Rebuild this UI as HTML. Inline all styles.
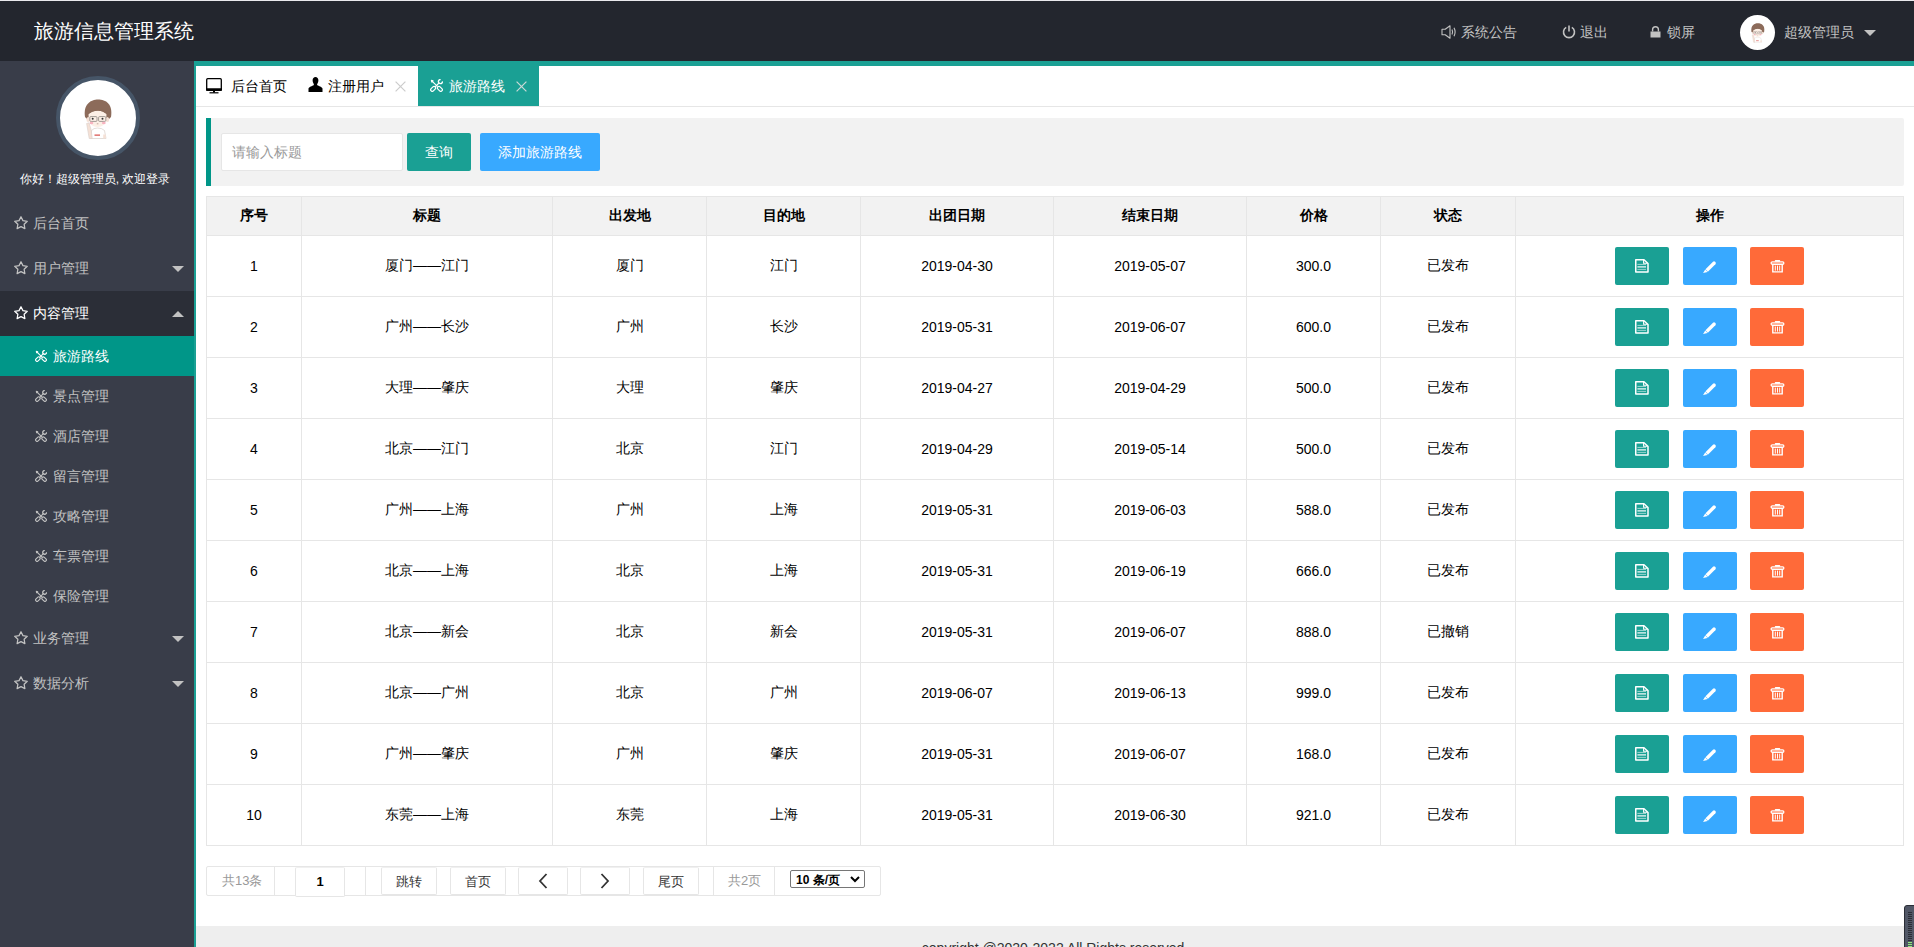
<!DOCTYPE html>
<html><head><meta charset="utf-8">
<style>
*{box-sizing:border-box;margin:0;padding:0}
html,body{width:1914px;height:947px;overflow:hidden;background:#fff;font-family:"Liberation Sans",sans-serif;font-size:14px;color:#333}
.abs{position:absolute}
svg{display:block}
#topline{left:0;top:0;width:1914px;height:1px;background:#e9e9ed}
#header{left:0;top:1px;width:1914px;height:60px;background:#23262e}
#logo{left:34px;top:16px;font-size:20px;color:#fff;line-height:28px;white-space:nowrap}
.htx{position:absolute;color:#c2c2c2;font-size:14px;line-height:20px;top:21px;white-space:nowrap}
.hic{position:absolute}
#side{left:0;top:61px;width:194px;height:886px;background:#393d49}
#main{left:194px;top:61px;width:1720px;height:886px;border-left:2px solid #1aa094;border-top:5px solid #1aa094;background:#fff}
.menu{left:0;width:194px;height:45px;font-size:14px;line-height:45px;white-space:nowrap}
.menu .ic{position:absolute;left:14px;top:15px}
.menu .tx{position:absolute;left:33px;top:0}
.menu .arr{position:absolute;left:172px;top:20px;width:0;height:0;border-left:6px solid transparent;border-right:6px solid transparent;border-top:6px solid #c2c2c2}
.menu .arr.up{border-top:0;border-bottom:6px solid #c2c2c2;top:20px}
.sub{left:0;width:194px;height:40px;color:#c2c2c2;font-size:14px;line-height:40px;white-space:nowrap}
.sub .ic{position:absolute;left:35px;top:14px}
.sub .tx{position:absolute;left:53px;top:0}
#welcome{left:-2px;top:110px;width:194px;text-align:center;color:#fff;font-size:12px;font-weight:normal;line-height:16px;white-space:nowrap}
#avatar{left:56px;top:15px;width:84px;height:84px;border-radius:50%;background:#fff;border:4px solid #465567;overflow:hidden}
#tabs{left:0;top:0;width:1718px;height:41px;border-bottom:1px solid #e6e6e6}
.tab{position:absolute;top:0;height:40px;line-height:40px;font-size:14px;color:#000;white-space:nowrap}
#quote{left:10px;top:52px;width:1698px;height:68px;background:#f2f2f2;border-left:5px solid #009688;border-radius:0 2px 2px 0}
#inp{position:absolute;left:10px;top:15px;width:182px;height:38px;background:#fff;border:1px solid #e6e6e6;border-radius:2px;color:#999;font-size:14px;line-height:36px;padding-left:10px}
.qbtn{position:absolute;top:15px;height:38px;line-height:38px;color:#fff;font-size:14px;border-radius:2px;text-align:center}
#tbl{left:10px;top:130px}
table{border-collapse:collapse;table-layout:fixed;width:1698px}
th,td{border:1px solid #e6e6e6;text-align:center;font-size:14px;color:#000;padding:0}
th{background:#f2f2f2;height:39px;font-weight:bold;color:#000}
td{height:61px}
.btns{display:flex;justify-content:center}
.b{position:relative;width:54px;height:38px;border-radius:2px;display:block}.b+.b{margin-left:14px}.b+.b+.b{margin-left:13px}
#pager{left:10px;top:800px;width:675px;height:30px;border:1px solid #e6e6e6;border-radius:2px}
.pgd{position:absolute;top:0;height:28px;border-left:1px solid #e6e6e6}
.pgb{position:absolute;top:0;height:28px;border:1px solid #e6e6e6;border-top-color:#f0f0f0;border-radius:2px;background:#fff;text-align:center;line-height:28px;font-size:13px;color:#333}
.pgt{position:absolute;top:0;height:28px;line-height:28px;font-size:13px;color:#999;white-space:nowrap}
#footer{left:0;top:860px;width:1718px;height:30px;background:#eee;text-align:center;font-size:14px;color:#333;line-height:20px;padding-top:12px}
</style></head><body>
<div id="topline" class="abs"></div>
<div id="header" class="abs">
  <div id="logo" class="abs">旅游信息管理系统</div>
  <span class="hic" style="left:1441px;top:24px"><svg width="16" height="14" viewBox="0 0 16 14" fill="none" stroke="#c2c2c2" stroke-width="1.1"><path d="M1 4.2h3.2L9 0.8v12.4L4.2 9.8H1z" stroke-linejoin="round"/><path d="M11 4.5q1.2 2.5 0 5"/><path d="M13 2.8q2.2 4.2 0 8.4"/></svg></span><span class="htx" style="left:1461px">系统公告</span>
  <span class="hic" style="left:1562px;top:24px"><svg width="14" height="14" viewBox="0 0 14 14" fill="none" stroke="#c2c2c2" stroke-width="1.6"><path d="M4.2 2.4A5.5 5.5 0 1 0 9.8 2.4"/><path d="M7 0.5v6"/></svg></span><span class="htx" style="left:1580px">退出</span>
  <span class="hic" style="left:1650px;top:25px"><svg width="11" height="12" viewBox="0 0 11 12"><path d="M2.6 5.5V3.6a2.9 2.9 0 0 1 5.8 0v1.9" fill="none" stroke="#c2c2c2" stroke-width="1.4"/><rect x="0.5" y="5.5" width="10" height="6" fill="#c2c2c2"/></svg></span><span class="htx" style="left:1667px">锁屏</span>
  <span class="abs" style="left:1740px;top:14px;width:35px;height:35px;border-radius:50%;background:#fff;overflow:hidden;"><svg viewBox="0 0 40 48" width="19.6" height="23.5" style="position:absolute;left:7.7px;top:6.4px">
<path d="M7 22 C5 9 13 4.5 20 4.5 C28 4.5 35 9 33 22 L30 25 L10 25Z" fill="#8c6b5a"/>
<ellipse cx="10.2" cy="24.5" rx="1.8" ry="2.6" fill="#f5e1d6"/><ellipse cx="29.4" cy="24.5" rx="1.8" ry="2.6" fill="#f5e1d6"/>
<path d="M10.5 19 Q10.5 32 19.5 32 Q28.5 32 28.5 19 Q24 15 19.5 15.5 Q15 15 10.5 19Z" fill="#fcefe6"/>
<path d="M9.5 20 Q11.5 13 20 14 Q27.5 13 29.5 20 Q26 15.8 20 15.8 Q14 15.8 9.5 20Z" fill="#8c6b5a"/>
<rect x="11.8" y="21.6" width="7.2" height="4.8" rx="1" fill="none" stroke="#8d8580" stroke-width="0.8"/>
<rect x="20.6" y="21.6" width="7.2" height="4.8" rx="1" fill="none" stroke="#8d8580" stroke-width="0.8"/>
<circle cx="14.7" cy="23.8" r="1" fill="#333"/><circle cx="24.5" cy="23.8" r="1" fill="#333"/>
<ellipse cx="13.4" cy="28" rx="1.9" ry="1.2" fill="#f7b3c0"/><ellipse cx="25.8" cy="28" rx="1.9" ry="1.2" fill="#f7b3c0"/>
<path d="M18.8 28.8h1.6" stroke="#a0766a" stroke-width="0.6"/>
<path d="M12.5 43.5 L13.5 35.5 Q15.5 33 19.5 33 Q24 33 26.5 35.5 L28 43.5Z" fill="#fff" stroke="#d9cfc9" stroke-width="0.7"/>
<path d="M16.5 40.2h5.5" stroke="#d9534f" stroke-width="1.3"/>
<path d="M8.6 28.5 L11 27.8 L13.2 35 L14.2 43.5 L11.2 43.5 Z" fill="#f5e1d6" stroke="#d9cfc9" stroke-width="0.6"/>
<rect x="25.2" y="39.5" width="2.6" height="3.8" fill="#f5e1d6"/>
</svg></span>
  <span class="htx" style="left:1784px">超级管理员</span>
  <span class="abs" style="left:1864px;top:29px;width:0;height:0;border-left:6px solid transparent;border-right:6px solid transparent;border-top:6px solid #c2c2c2"></span>
</div>
<div id="side" class="abs">
  <div id="avatar" class="abs"><svg viewBox="0 0 40 48" width="40" height="48" style="position:absolute;left:18px;top:15px">
<path d="M7 22 C5 9 13 4.5 20 4.5 C28 4.5 35 9 33 22 L30 25 L10 25Z" fill="#8c6b5a"/>
<ellipse cx="10.2" cy="24.5" rx="1.8" ry="2.6" fill="#f5e1d6"/><ellipse cx="29.4" cy="24.5" rx="1.8" ry="2.6" fill="#f5e1d6"/>
<path d="M10.5 19 Q10.5 32 19.5 32 Q28.5 32 28.5 19 Q24 15 19.5 15.5 Q15 15 10.5 19Z" fill="#fcefe6"/>
<path d="M9.5 20 Q11.5 13 20 14 Q27.5 13 29.5 20 Q26 15.8 20 15.8 Q14 15.8 9.5 20Z" fill="#8c6b5a"/>
<rect x="11.8" y="21.6" width="7.2" height="4.8" rx="1" fill="none" stroke="#8d8580" stroke-width="0.8"/>
<rect x="20.6" y="21.6" width="7.2" height="4.8" rx="1" fill="none" stroke="#8d8580" stroke-width="0.8"/>
<circle cx="14.7" cy="23.8" r="1" fill="#333"/><circle cx="24.5" cy="23.8" r="1" fill="#333"/>
<ellipse cx="13.4" cy="28" rx="1.9" ry="1.2" fill="#f7b3c0"/><ellipse cx="25.8" cy="28" rx="1.9" ry="1.2" fill="#f7b3c0"/>
<path d="M18.8 28.8h1.6" stroke="#a0766a" stroke-width="0.6"/>
<path d="M12.5 43.5 L13.5 35.5 Q15.5 33 19.5 33 Q24 33 26.5 35.5 L28 43.5Z" fill="#fff" stroke="#d9cfc9" stroke-width="0.7"/>
<path d="M16.5 40.2h5.5" stroke="#d9534f" stroke-width="1.3"/>
<path d="M8.6 28.5 L11 27.8 L13.2 35 L14.2 43.5 L11.2 43.5 Z" fill="#f5e1d6" stroke="#d9cfc9" stroke-width="0.6"/>
<rect x="25.2" y="39.5" width="2.6" height="3.8" fill="#f5e1d6"/>
</svg></div>
  <div id="welcome" class="abs">你好！超级管理员, 欢迎登录</div>
  <div class="menu abs" style="top:140px;color:#c2c2c2"><span class="ic"><svg width="14" height="14" viewBox="0 0 14 14"><polygon points="7.00,0.70 8.94,4.63 13.28,5.26 10.14,8.32 10.88,12.64 7.00,10.60 3.12,12.64 3.86,8.32 0.72,5.26 5.06,4.63" fill="none" stroke="currentColor" stroke-width="1.25" stroke-linejoin="round"/></svg></span><span class="tx">后台首页</span></div><div class="menu abs" style="top:185px;color:#c2c2c2"><span class="ic"><svg width="14" height="14" viewBox="0 0 14 14"><polygon points="7.00,0.70 8.94,4.63 13.28,5.26 10.14,8.32 10.88,12.64 7.00,10.60 3.12,12.64 3.86,8.32 0.72,5.26 5.06,4.63" fill="none" stroke="currentColor" stroke-width="1.25" stroke-linejoin="round"/></svg></span><span class="tx">用户管理</span><span class="arr"></span></div><div class="menu abs" style="top:230px;background:#2b2e37;color:#fff"><span class="ic"><svg width="14" height="14" viewBox="0 0 14 14"><polygon points="7.00,0.70 8.94,4.63 13.28,5.26 10.14,8.32 10.88,12.64 7.00,10.60 3.12,12.64 3.86,8.32 0.72,5.26 5.06,4.63" fill="none" stroke="currentColor" stroke-width="1.25" stroke-linejoin="round"/></svg></span><span class="tx">内容管理</span><span class="arr up"></span></div><div class="sub abs" style="top:275px;background:#009688;color:#fff;"><span class="ic"><svg width="12" height="12" viewBox="0 0 12 12" fill="none" stroke="currentColor"><g transform="translate(6 6) rotate(45)"><path d="M-7.2 -0.2L-5.4 -1.4L-4.4 -0.4L-4.4 0.4L-5.4 1.4L-7.2 0.2Z" fill="currentColor" stroke="none"/><path d="M-4.5 0H1.5" stroke-width="1.1"/><rect x="1.8" y="-1.45" width="5.2" height="2.9" rx="1.45" stroke-width="1.1"/></g><g transform="translate(6 6) rotate(-45)"><rect x="-7" y="-1.45" width="5.2" height="2.9" rx="1.45" stroke-width="1.1"/><path d="M-1.8 0H3.6" stroke-width="1.1"/><path d="M6.6 -1.2A1.9 1.9 0 1 0 6.6 1.2" stroke-width="1.3"/></g></svg></span><span class="tx">旅游路线</span></div><div class="sub abs" style="top:315px;"><span class="ic"><svg width="12" height="12" viewBox="0 0 12 12" fill="none" stroke="currentColor"><g transform="translate(6 6) rotate(45)"><path d="M-7.2 -0.2L-5.4 -1.4L-4.4 -0.4L-4.4 0.4L-5.4 1.4L-7.2 0.2Z" fill="currentColor" stroke="none"/><path d="M-4.5 0H1.5" stroke-width="1.1"/><rect x="1.8" y="-1.45" width="5.2" height="2.9" rx="1.45" stroke-width="1.1"/></g><g transform="translate(6 6) rotate(-45)"><rect x="-7" y="-1.45" width="5.2" height="2.9" rx="1.45" stroke-width="1.1"/><path d="M-1.8 0H3.6" stroke-width="1.1"/><path d="M6.6 -1.2A1.9 1.9 0 1 0 6.6 1.2" stroke-width="1.3"/></g></svg></span><span class="tx">景点管理</span></div><div class="sub abs" style="top:355px;"><span class="ic"><svg width="12" height="12" viewBox="0 0 12 12" fill="none" stroke="currentColor"><g transform="translate(6 6) rotate(45)"><path d="M-7.2 -0.2L-5.4 -1.4L-4.4 -0.4L-4.4 0.4L-5.4 1.4L-7.2 0.2Z" fill="currentColor" stroke="none"/><path d="M-4.5 0H1.5" stroke-width="1.1"/><rect x="1.8" y="-1.45" width="5.2" height="2.9" rx="1.45" stroke-width="1.1"/></g><g transform="translate(6 6) rotate(-45)"><rect x="-7" y="-1.45" width="5.2" height="2.9" rx="1.45" stroke-width="1.1"/><path d="M-1.8 0H3.6" stroke-width="1.1"/><path d="M6.6 -1.2A1.9 1.9 0 1 0 6.6 1.2" stroke-width="1.3"/></g></svg></span><span class="tx">酒店管理</span></div><div class="sub abs" style="top:395px;"><span class="ic"><svg width="12" height="12" viewBox="0 0 12 12" fill="none" stroke="currentColor"><g transform="translate(6 6) rotate(45)"><path d="M-7.2 -0.2L-5.4 -1.4L-4.4 -0.4L-4.4 0.4L-5.4 1.4L-7.2 0.2Z" fill="currentColor" stroke="none"/><path d="M-4.5 0H1.5" stroke-width="1.1"/><rect x="1.8" y="-1.45" width="5.2" height="2.9" rx="1.45" stroke-width="1.1"/></g><g transform="translate(6 6) rotate(-45)"><rect x="-7" y="-1.45" width="5.2" height="2.9" rx="1.45" stroke-width="1.1"/><path d="M-1.8 0H3.6" stroke-width="1.1"/><path d="M6.6 -1.2A1.9 1.9 0 1 0 6.6 1.2" stroke-width="1.3"/></g></svg></span><span class="tx">留言管理</span></div><div class="sub abs" style="top:435px;"><span class="ic"><svg width="12" height="12" viewBox="0 0 12 12" fill="none" stroke="currentColor"><g transform="translate(6 6) rotate(45)"><path d="M-7.2 -0.2L-5.4 -1.4L-4.4 -0.4L-4.4 0.4L-5.4 1.4L-7.2 0.2Z" fill="currentColor" stroke="none"/><path d="M-4.5 0H1.5" stroke-width="1.1"/><rect x="1.8" y="-1.45" width="5.2" height="2.9" rx="1.45" stroke-width="1.1"/></g><g transform="translate(6 6) rotate(-45)"><rect x="-7" y="-1.45" width="5.2" height="2.9" rx="1.45" stroke-width="1.1"/><path d="M-1.8 0H3.6" stroke-width="1.1"/><path d="M6.6 -1.2A1.9 1.9 0 1 0 6.6 1.2" stroke-width="1.3"/></g></svg></span><span class="tx">攻略管理</span></div><div class="sub abs" style="top:475px;"><span class="ic"><svg width="12" height="12" viewBox="0 0 12 12" fill="none" stroke="currentColor"><g transform="translate(6 6) rotate(45)"><path d="M-7.2 -0.2L-5.4 -1.4L-4.4 -0.4L-4.4 0.4L-5.4 1.4L-7.2 0.2Z" fill="currentColor" stroke="none"/><path d="M-4.5 0H1.5" stroke-width="1.1"/><rect x="1.8" y="-1.45" width="5.2" height="2.9" rx="1.45" stroke-width="1.1"/></g><g transform="translate(6 6) rotate(-45)"><rect x="-7" y="-1.45" width="5.2" height="2.9" rx="1.45" stroke-width="1.1"/><path d="M-1.8 0H3.6" stroke-width="1.1"/><path d="M6.6 -1.2A1.9 1.9 0 1 0 6.6 1.2" stroke-width="1.3"/></g></svg></span><span class="tx">车票管理</span></div><div class="sub abs" style="top:515px;"><span class="ic"><svg width="12" height="12" viewBox="0 0 12 12" fill="none" stroke="currentColor"><g transform="translate(6 6) rotate(45)"><path d="M-7.2 -0.2L-5.4 -1.4L-4.4 -0.4L-4.4 0.4L-5.4 1.4L-7.2 0.2Z" fill="currentColor" stroke="none"/><path d="M-4.5 0H1.5" stroke-width="1.1"/><rect x="1.8" y="-1.45" width="5.2" height="2.9" rx="1.45" stroke-width="1.1"/></g><g transform="translate(6 6) rotate(-45)"><rect x="-7" y="-1.45" width="5.2" height="2.9" rx="1.45" stroke-width="1.1"/><path d="M-1.8 0H3.6" stroke-width="1.1"/><path d="M6.6 -1.2A1.9 1.9 0 1 0 6.6 1.2" stroke-width="1.3"/></g></svg></span><span class="tx">保险管理</span></div><div class="menu abs" style="top:555px;color:#c2c2c2"><span class="ic"><svg width="14" height="14" viewBox="0 0 14 14"><polygon points="7.00,0.70 8.94,4.63 13.28,5.26 10.14,8.32 10.88,12.64 7.00,10.60 3.12,12.64 3.86,8.32 0.72,5.26 5.06,4.63" fill="none" stroke="currentColor" stroke-width="1.25" stroke-linejoin="round"/></svg></span><span class="tx">业务管理</span><span class="arr"></span></div><div class="menu abs" style="top:600px;color:#c2c2c2"><span class="ic"><svg width="14" height="14" viewBox="0 0 14 14"><polygon points="7.00,0.70 8.94,4.63 13.28,5.26 10.14,8.32 10.88,12.64 7.00,10.60 3.12,12.64 3.86,8.32 0.72,5.26 5.06,4.63" fill="none" stroke="currentColor" stroke-width="1.25" stroke-linejoin="round"/></svg></span><span class="tx">数据分析</span><span class="arr"></span></div>
</div>
<div id="main" class="abs">
  <div id="tabs" class="abs">
    <div class="tab" style="left:10px"><span class="abs" style="left:0;top:12px"><svg width="16" height="16" viewBox="0 0 16 16"><rect x="0.7" y="0.7" width="14.6" height="11.6" rx="1" fill="none" stroke="#000" stroke-width="1.3"/><rect x="0" y="10.2" width="16" height="2.6" rx="0.6" fill="#000"/><rect x="7" y="12.5" width="2" height="2" fill="#000"/><rect x="3.5" y="14.2" width="9" height="1.2" fill="#000"/></svg></span><span class="abs" style="left:25px;top:0">后台首页</span></div>
    <div class="tab" style="left:112px"><span class="abs" style="left:0;top:11px"><svg width="15" height="15" viewBox="0 0 15 15"><path d="M4.6 3.3C4.6 1.4 5.8 0 7.5 0S10.4 1.4 10.4 3.3c0 1.3-.3 2.4-.9 3.3-.4.6-.6 1.1-.1 1.6C10.5 9 14.2 9.6 14.5 11.6V15H0.5v-3.4C0.8 9.6 4.5 9 5.6 8.2c.5-.5.3-1-.1-1.6-.6-.9-.9-2-.9-3.3z" fill="#000"/></svg></span><span class="abs" style="left:20px;top:0">注册用户</span><span class="abs" style="left:87px;top:15px"><svg width="11" height="11" viewBox="0 0 11 11"><path d="M0.6 0.6l9.8 9.8M10.4 0.6l-9.8 9.8" stroke="#cccccc" stroke-width="1.2"/></svg></span></div>
    <div class="tab" style="left:222px;width:121px;background:#1aa094;color:#fff"><span class="abs" style="left:12px;top:13px"><svg width="13" height="13" viewBox="0 0 12 12" fill="none" stroke="currentColor"><g transform="translate(6 6) rotate(45)"><path d="M-7.2 -0.2L-5.4 -1.4L-4.4 -0.4L-4.4 0.4L-5.4 1.4L-7.2 0.2Z" fill="currentColor" stroke="none"/><path d="M-4.5 0H1.5" stroke-width="1.1"/><rect x="1.8" y="-1.45" width="5.2" height="2.9" rx="1.45" stroke-width="1.1"/></g><g transform="translate(6 6) rotate(-45)"><rect x="-7" y="-1.45" width="5.2" height="2.9" rx="1.45" stroke-width="1.1"/><path d="M-1.8 0H3.6" stroke-width="1.1"/><path d="M6.6 -1.2A1.9 1.9 0 1 0 6.6 1.2" stroke-width="1.3"/></g></svg></span><span class="abs" style="left:31px;top:0">旅游路线</span><span class="abs" style="left:98px;top:15px"><svg width="11" height="11" viewBox="0 0 11 11"><path d="M0.6 0.6l9.8 9.8M10.4 0.6l-9.8 9.8" stroke="#cbd9d6" stroke-width="1.2"/></svg></span></div>
  </div>
  <div id="quote" class="abs">
    <div id="inp">请输入标题</div>
    <div class="qbtn" style="left:196px;width:64px;background:#1aa094">查询</div>
    <div class="qbtn" style="left:269px;width:120px;background:#38a9ff">添加旅游路线</div>
  </div>
  <div id="tbl" class="abs">
  <table>
  <colgroup><col style="width:95px"><col style="width:251px"><col style="width:154px"><col style="width:154px"><col style="width:193px"><col style="width:193px"><col style="width:134px"><col style="width:135px"><col style="width:388px"></colgroup>
  <thead><tr><th>序号</th><th>标题</th><th>出发地</th><th>目的地</th><th>出团日期</th><th>结束日期</th><th>价格</th><th>状态</th><th>操作</th></tr></thead>
  <tbody>
  <tr><td>1</td><td>厦门——江门</td><td>厦门</td><td>江门</td><td>2019-04-30</td><td>2019-05-07</td><td>300.0</td><td>已发布</td><td><div class="btns"><span class="b" style="background:#1aa094"><svg style="position:absolute;left:20px;top:12px" width="14" height="14" viewBox="0 0 14 14" fill="none" stroke="#fff"><path d="M0.75 0.75H9L13 4.5V12.95H0.75Z" stroke-width="1.5" stroke-linejoin="round"/><path d="M8.6 1V4.3H12.6" stroke-width="1.1"/><path d="M2.4 5.4H11" stroke-width="1" opacity=".6"/><path d="M2.4 7.9H11" stroke-width="1.2"/><path d="M2.4 10.4H11" stroke-width="1" opacity=".55"/></svg></span><span class="b" style="background:#38a9ff"><svg style="position:absolute;left:20px;top:13px" width="14" height="14" viewBox="0 0 14 14"><path d="M2.5 9.3L10 1.8a1.5 1.5 0 0 1 2.1 0l0.3 0.3a1.5 1.5 0 0 1 0 2.1L4.9 11.7Z" fill="#fff"/><path d="M2.2 9.6L0.1 13L4.6 12Z" fill="#fff"/></svg></span><span class="b" style="background:#ff6a39"><svg style="position:absolute;left:20px;top:13px" width="15" height="13" viewBox="0 0 15 13" fill="none" stroke="#fff"><rect x="1.15" y="1.85" width="12.7" height="2.4" rx="1.2" stroke-width="1.3"/><rect x="4.8" y="0" width="5.4" height="1.7" rx="0.7" fill="#fff" stroke="none"/><path d="M2.8 4.4V11.9H12.2V4.4" stroke-width="1.4"/><path d="M5.3 5.6V10.6M7.5 5.6V10.6M9.7 5.6V10.6" stroke-width="1"/></svg></span></div></td></tr>
<tr><td>2</td><td>广州——长沙</td><td>广州</td><td>长沙</td><td>2019-05-31</td><td>2019-06-07</td><td>600.0</td><td>已发布</td><td><div class="btns"><span class="b" style="background:#1aa094"><svg style="position:absolute;left:20px;top:12px" width="14" height="14" viewBox="0 0 14 14" fill="none" stroke="#fff"><path d="M0.75 0.75H9L13 4.5V12.95H0.75Z" stroke-width="1.5" stroke-linejoin="round"/><path d="M8.6 1V4.3H12.6" stroke-width="1.1"/><path d="M2.4 5.4H11" stroke-width="1" opacity=".6"/><path d="M2.4 7.9H11" stroke-width="1.2"/><path d="M2.4 10.4H11" stroke-width="1" opacity=".55"/></svg></span><span class="b" style="background:#38a9ff"><svg style="position:absolute;left:20px;top:13px" width="14" height="14" viewBox="0 0 14 14"><path d="M2.5 9.3L10 1.8a1.5 1.5 0 0 1 2.1 0l0.3 0.3a1.5 1.5 0 0 1 0 2.1L4.9 11.7Z" fill="#fff"/><path d="M2.2 9.6L0.1 13L4.6 12Z" fill="#fff"/></svg></span><span class="b" style="background:#ff6a39"><svg style="position:absolute;left:20px;top:13px" width="15" height="13" viewBox="0 0 15 13" fill="none" stroke="#fff"><rect x="1.15" y="1.85" width="12.7" height="2.4" rx="1.2" stroke-width="1.3"/><rect x="4.8" y="0" width="5.4" height="1.7" rx="0.7" fill="#fff" stroke="none"/><path d="M2.8 4.4V11.9H12.2V4.4" stroke-width="1.4"/><path d="M5.3 5.6V10.6M7.5 5.6V10.6M9.7 5.6V10.6" stroke-width="1"/></svg></span></div></td></tr>
<tr><td>3</td><td>大理——肇庆</td><td>大理</td><td>肇庆</td><td>2019-04-27</td><td>2019-04-29</td><td>500.0</td><td>已发布</td><td><div class="btns"><span class="b" style="background:#1aa094"><svg style="position:absolute;left:20px;top:12px" width="14" height="14" viewBox="0 0 14 14" fill="none" stroke="#fff"><path d="M0.75 0.75H9L13 4.5V12.95H0.75Z" stroke-width="1.5" stroke-linejoin="round"/><path d="M8.6 1V4.3H12.6" stroke-width="1.1"/><path d="M2.4 5.4H11" stroke-width="1" opacity=".6"/><path d="M2.4 7.9H11" stroke-width="1.2"/><path d="M2.4 10.4H11" stroke-width="1" opacity=".55"/></svg></span><span class="b" style="background:#38a9ff"><svg style="position:absolute;left:20px;top:13px" width="14" height="14" viewBox="0 0 14 14"><path d="M2.5 9.3L10 1.8a1.5 1.5 0 0 1 2.1 0l0.3 0.3a1.5 1.5 0 0 1 0 2.1L4.9 11.7Z" fill="#fff"/><path d="M2.2 9.6L0.1 13L4.6 12Z" fill="#fff"/></svg></span><span class="b" style="background:#ff6a39"><svg style="position:absolute;left:20px;top:13px" width="15" height="13" viewBox="0 0 15 13" fill="none" stroke="#fff"><rect x="1.15" y="1.85" width="12.7" height="2.4" rx="1.2" stroke-width="1.3"/><rect x="4.8" y="0" width="5.4" height="1.7" rx="0.7" fill="#fff" stroke="none"/><path d="M2.8 4.4V11.9H12.2V4.4" stroke-width="1.4"/><path d="M5.3 5.6V10.6M7.5 5.6V10.6M9.7 5.6V10.6" stroke-width="1"/></svg></span></div></td></tr>
<tr><td>4</td><td>北京——江门</td><td>北京</td><td>江门</td><td>2019-04-29</td><td>2019-05-14</td><td>500.0</td><td>已发布</td><td><div class="btns"><span class="b" style="background:#1aa094"><svg style="position:absolute;left:20px;top:12px" width="14" height="14" viewBox="0 0 14 14" fill="none" stroke="#fff"><path d="M0.75 0.75H9L13 4.5V12.95H0.75Z" stroke-width="1.5" stroke-linejoin="round"/><path d="M8.6 1V4.3H12.6" stroke-width="1.1"/><path d="M2.4 5.4H11" stroke-width="1" opacity=".6"/><path d="M2.4 7.9H11" stroke-width="1.2"/><path d="M2.4 10.4H11" stroke-width="1" opacity=".55"/></svg></span><span class="b" style="background:#38a9ff"><svg style="position:absolute;left:20px;top:13px" width="14" height="14" viewBox="0 0 14 14"><path d="M2.5 9.3L10 1.8a1.5 1.5 0 0 1 2.1 0l0.3 0.3a1.5 1.5 0 0 1 0 2.1L4.9 11.7Z" fill="#fff"/><path d="M2.2 9.6L0.1 13L4.6 12Z" fill="#fff"/></svg></span><span class="b" style="background:#ff6a39"><svg style="position:absolute;left:20px;top:13px" width="15" height="13" viewBox="0 0 15 13" fill="none" stroke="#fff"><rect x="1.15" y="1.85" width="12.7" height="2.4" rx="1.2" stroke-width="1.3"/><rect x="4.8" y="0" width="5.4" height="1.7" rx="0.7" fill="#fff" stroke="none"/><path d="M2.8 4.4V11.9H12.2V4.4" stroke-width="1.4"/><path d="M5.3 5.6V10.6M7.5 5.6V10.6M9.7 5.6V10.6" stroke-width="1"/></svg></span></div></td></tr>
<tr><td>5</td><td>广州——上海</td><td>广州</td><td>上海</td><td>2019-05-31</td><td>2019-06-03</td><td>588.0</td><td>已发布</td><td><div class="btns"><span class="b" style="background:#1aa094"><svg style="position:absolute;left:20px;top:12px" width="14" height="14" viewBox="0 0 14 14" fill="none" stroke="#fff"><path d="M0.75 0.75H9L13 4.5V12.95H0.75Z" stroke-width="1.5" stroke-linejoin="round"/><path d="M8.6 1V4.3H12.6" stroke-width="1.1"/><path d="M2.4 5.4H11" stroke-width="1" opacity=".6"/><path d="M2.4 7.9H11" stroke-width="1.2"/><path d="M2.4 10.4H11" stroke-width="1" opacity=".55"/></svg></span><span class="b" style="background:#38a9ff"><svg style="position:absolute;left:20px;top:13px" width="14" height="14" viewBox="0 0 14 14"><path d="M2.5 9.3L10 1.8a1.5 1.5 0 0 1 2.1 0l0.3 0.3a1.5 1.5 0 0 1 0 2.1L4.9 11.7Z" fill="#fff"/><path d="M2.2 9.6L0.1 13L4.6 12Z" fill="#fff"/></svg></span><span class="b" style="background:#ff6a39"><svg style="position:absolute;left:20px;top:13px" width="15" height="13" viewBox="0 0 15 13" fill="none" stroke="#fff"><rect x="1.15" y="1.85" width="12.7" height="2.4" rx="1.2" stroke-width="1.3"/><rect x="4.8" y="0" width="5.4" height="1.7" rx="0.7" fill="#fff" stroke="none"/><path d="M2.8 4.4V11.9H12.2V4.4" stroke-width="1.4"/><path d="M5.3 5.6V10.6M7.5 5.6V10.6M9.7 5.6V10.6" stroke-width="1"/></svg></span></div></td></tr>
<tr><td>6</td><td>北京——上海</td><td>北京</td><td>上海</td><td>2019-05-31</td><td>2019-06-19</td><td>666.0</td><td>已发布</td><td><div class="btns"><span class="b" style="background:#1aa094"><svg style="position:absolute;left:20px;top:12px" width="14" height="14" viewBox="0 0 14 14" fill="none" stroke="#fff"><path d="M0.75 0.75H9L13 4.5V12.95H0.75Z" stroke-width="1.5" stroke-linejoin="round"/><path d="M8.6 1V4.3H12.6" stroke-width="1.1"/><path d="M2.4 5.4H11" stroke-width="1" opacity=".6"/><path d="M2.4 7.9H11" stroke-width="1.2"/><path d="M2.4 10.4H11" stroke-width="1" opacity=".55"/></svg></span><span class="b" style="background:#38a9ff"><svg style="position:absolute;left:20px;top:13px" width="14" height="14" viewBox="0 0 14 14"><path d="M2.5 9.3L10 1.8a1.5 1.5 0 0 1 2.1 0l0.3 0.3a1.5 1.5 0 0 1 0 2.1L4.9 11.7Z" fill="#fff"/><path d="M2.2 9.6L0.1 13L4.6 12Z" fill="#fff"/></svg></span><span class="b" style="background:#ff6a39"><svg style="position:absolute;left:20px;top:13px" width="15" height="13" viewBox="0 0 15 13" fill="none" stroke="#fff"><rect x="1.15" y="1.85" width="12.7" height="2.4" rx="1.2" stroke-width="1.3"/><rect x="4.8" y="0" width="5.4" height="1.7" rx="0.7" fill="#fff" stroke="none"/><path d="M2.8 4.4V11.9H12.2V4.4" stroke-width="1.4"/><path d="M5.3 5.6V10.6M7.5 5.6V10.6M9.7 5.6V10.6" stroke-width="1"/></svg></span></div></td></tr>
<tr><td>7</td><td>北京——新会</td><td>北京</td><td>新会</td><td>2019-05-31</td><td>2019-06-07</td><td>888.0</td><td>已撤销</td><td><div class="btns"><span class="b" style="background:#1aa094"><svg style="position:absolute;left:20px;top:12px" width="14" height="14" viewBox="0 0 14 14" fill="none" stroke="#fff"><path d="M0.75 0.75H9L13 4.5V12.95H0.75Z" stroke-width="1.5" stroke-linejoin="round"/><path d="M8.6 1V4.3H12.6" stroke-width="1.1"/><path d="M2.4 5.4H11" stroke-width="1" opacity=".6"/><path d="M2.4 7.9H11" stroke-width="1.2"/><path d="M2.4 10.4H11" stroke-width="1" opacity=".55"/></svg></span><span class="b" style="background:#38a9ff"><svg style="position:absolute;left:20px;top:13px" width="14" height="14" viewBox="0 0 14 14"><path d="M2.5 9.3L10 1.8a1.5 1.5 0 0 1 2.1 0l0.3 0.3a1.5 1.5 0 0 1 0 2.1L4.9 11.7Z" fill="#fff"/><path d="M2.2 9.6L0.1 13L4.6 12Z" fill="#fff"/></svg></span><span class="b" style="background:#ff6a39"><svg style="position:absolute;left:20px;top:13px" width="15" height="13" viewBox="0 0 15 13" fill="none" stroke="#fff"><rect x="1.15" y="1.85" width="12.7" height="2.4" rx="1.2" stroke-width="1.3"/><rect x="4.8" y="0" width="5.4" height="1.7" rx="0.7" fill="#fff" stroke="none"/><path d="M2.8 4.4V11.9H12.2V4.4" stroke-width="1.4"/><path d="M5.3 5.6V10.6M7.5 5.6V10.6M9.7 5.6V10.6" stroke-width="1"/></svg></span></div></td></tr>
<tr><td>8</td><td>北京——广州</td><td>北京</td><td>广州</td><td>2019-06-07</td><td>2019-06-13</td><td>999.0</td><td>已发布</td><td><div class="btns"><span class="b" style="background:#1aa094"><svg style="position:absolute;left:20px;top:12px" width="14" height="14" viewBox="0 0 14 14" fill="none" stroke="#fff"><path d="M0.75 0.75H9L13 4.5V12.95H0.75Z" stroke-width="1.5" stroke-linejoin="round"/><path d="M8.6 1V4.3H12.6" stroke-width="1.1"/><path d="M2.4 5.4H11" stroke-width="1" opacity=".6"/><path d="M2.4 7.9H11" stroke-width="1.2"/><path d="M2.4 10.4H11" stroke-width="1" opacity=".55"/></svg></span><span class="b" style="background:#38a9ff"><svg style="position:absolute;left:20px;top:13px" width="14" height="14" viewBox="0 0 14 14"><path d="M2.5 9.3L10 1.8a1.5 1.5 0 0 1 2.1 0l0.3 0.3a1.5 1.5 0 0 1 0 2.1L4.9 11.7Z" fill="#fff"/><path d="M2.2 9.6L0.1 13L4.6 12Z" fill="#fff"/></svg></span><span class="b" style="background:#ff6a39"><svg style="position:absolute;left:20px;top:13px" width="15" height="13" viewBox="0 0 15 13" fill="none" stroke="#fff"><rect x="1.15" y="1.85" width="12.7" height="2.4" rx="1.2" stroke-width="1.3"/><rect x="4.8" y="0" width="5.4" height="1.7" rx="0.7" fill="#fff" stroke="none"/><path d="M2.8 4.4V11.9H12.2V4.4" stroke-width="1.4"/><path d="M5.3 5.6V10.6M7.5 5.6V10.6M9.7 5.6V10.6" stroke-width="1"/></svg></span></div></td></tr>
<tr><td>9</td><td>广州——肇庆</td><td>广州</td><td>肇庆</td><td>2019-05-31</td><td>2019-06-07</td><td>168.0</td><td>已发布</td><td><div class="btns"><span class="b" style="background:#1aa094"><svg style="position:absolute;left:20px;top:12px" width="14" height="14" viewBox="0 0 14 14" fill="none" stroke="#fff"><path d="M0.75 0.75H9L13 4.5V12.95H0.75Z" stroke-width="1.5" stroke-linejoin="round"/><path d="M8.6 1V4.3H12.6" stroke-width="1.1"/><path d="M2.4 5.4H11" stroke-width="1" opacity=".6"/><path d="M2.4 7.9H11" stroke-width="1.2"/><path d="M2.4 10.4H11" stroke-width="1" opacity=".55"/></svg></span><span class="b" style="background:#38a9ff"><svg style="position:absolute;left:20px;top:13px" width="14" height="14" viewBox="0 0 14 14"><path d="M2.5 9.3L10 1.8a1.5 1.5 0 0 1 2.1 0l0.3 0.3a1.5 1.5 0 0 1 0 2.1L4.9 11.7Z" fill="#fff"/><path d="M2.2 9.6L0.1 13L4.6 12Z" fill="#fff"/></svg></span><span class="b" style="background:#ff6a39"><svg style="position:absolute;left:20px;top:13px" width="15" height="13" viewBox="0 0 15 13" fill="none" stroke="#fff"><rect x="1.15" y="1.85" width="12.7" height="2.4" rx="1.2" stroke-width="1.3"/><rect x="4.8" y="0" width="5.4" height="1.7" rx="0.7" fill="#fff" stroke="none"/><path d="M2.8 4.4V11.9H12.2V4.4" stroke-width="1.4"/><path d="M5.3 5.6V10.6M7.5 5.6V10.6M9.7 5.6V10.6" stroke-width="1"/></svg></span></div></td></tr>
<tr><td>10</td><td>东莞——上海</td><td>东莞</td><td>上海</td><td>2019-05-31</td><td>2019-06-30</td><td>921.0</td><td>已发布</td><td><div class="btns"><span class="b" style="background:#1aa094"><svg style="position:absolute;left:20px;top:12px" width="14" height="14" viewBox="0 0 14 14" fill="none" stroke="#fff"><path d="M0.75 0.75H9L13 4.5V12.95H0.75Z" stroke-width="1.5" stroke-linejoin="round"/><path d="M8.6 1V4.3H12.6" stroke-width="1.1"/><path d="M2.4 5.4H11" stroke-width="1" opacity=".6"/><path d="M2.4 7.9H11" stroke-width="1.2"/><path d="M2.4 10.4H11" stroke-width="1" opacity=".55"/></svg></span><span class="b" style="background:#38a9ff"><svg style="position:absolute;left:20px;top:13px" width="14" height="14" viewBox="0 0 14 14"><path d="M2.5 9.3L10 1.8a1.5 1.5 0 0 1 2.1 0l0.3 0.3a1.5 1.5 0 0 1 0 2.1L4.9 11.7Z" fill="#fff"/><path d="M2.2 9.6L0.1 13L4.6 12Z" fill="#fff"/></svg></span><span class="b" style="background:#ff6a39"><svg style="position:absolute;left:20px;top:13px" width="15" height="13" viewBox="0 0 15 13" fill="none" stroke="#fff"><rect x="1.15" y="1.85" width="12.7" height="2.4" rx="1.2" stroke-width="1.3"/><rect x="4.8" y="0" width="5.4" height="1.7" rx="0.7" fill="#fff" stroke="none"/><path d="M2.8 4.4V11.9H12.2V4.4" stroke-width="1.4"/><path d="M5.3 5.6V10.6M7.5 5.6V10.6M9.7 5.6V10.6" stroke-width="1"/></svg></span></div></td></tr>
  </tbody></table>
  </div>
  <div id="pager" class="abs">
    <span class="pgt" style="left:15px">共13条</span>
    <span class="pgd" style="left:67px"></span>
    <span class="pgb" style="left:88px;top:0;width:50px;height:30px;color:#000;font-weight:bold;line-height:28px">1</span>
    <span class="pgd" style="left:158px"></span>
    <span class="pgb" style="left:174px;width:56px">跳转</span>
    <span class="pgb" style="left:243px;width:56px">首页</span>
    <span class="pgb" style="left:311px;width:50px;padding-top:5px"><span style="display:inline-block;vertical-align:top"><svg width="10" height="16" viewBox="0 0 10 16"><path d="M8.5 1L2 8l6.5 7" fill="none" stroke="#333" stroke-width="1.8"/></svg></span></span>
    <span class="pgb" style="left:373px;width:50px;padding-top:5px"><span style="display:inline-block;vertical-align:top"><svg width="10" height="16" viewBox="0 0 10 16"><path d="M1.5 1L8 8l-6.5 7" fill="none" stroke="#333" stroke-width="1.8"/></svg></span></span>
    <span class="pgb" style="left:436px;width:56px">尾页</span>
    <span class="pgd" style="left:506px"></span>
    <span class="pgt" style="left:521px">共2页</span>
    <span class="pgd" style="left:567px"></span>
    <span class="abs" style="left:583px;top:3px;width:75px;height:18px;border:1px solid #767676;border-radius:2px;font-size:12px;font-weight:bold;line-height:18px;color:#000;padding-left:5px;white-space:nowrap">10 条/页<svg style="position:absolute;left:59px;top:5px" width="10" height="7" viewBox="0 0 10 7"><path d="M1 1l4 4 4-4" fill="none" stroke="#000" stroke-width="2"/></svg></span>
  </div>
  <div id="footer" class="abs">copyright @2020-2022 All Rights reserved.</div>
</div>
<svg class="abs" style="left:1904px;top:905px" width="10" height="42" viewBox="0 0 10 42"><path d="M0.5 43V3Q0.5 0.5 3 0.5H11V43Z" fill="#515766" stroke="#2b2e36" stroke-width="1"/><rect x="4" y="7" width="4" height="1" fill="#2b2e36"/><rect x="4" y="9" width="4" height="1" fill="#2b2e36"/><rect x="4" y="11" width="4" height="1" fill="#2b2e36"/><rect x="4" y="13" width="4" height="1" fill="#2b2e36"/><rect x="4" y="15" width="4" height="1" fill="#2b2e36"/><rect x="4" y="17" width="4" height="1" fill="#2b2e36"/><rect x="4" y="19" width="4" height="1" fill="#2b2e36"/><rect x="4" y="21" width="4" height="1" fill="#2b2e36"/><rect x="4" y="23" width="4" height="1" fill="#2b2e36"/><rect x="4" y="25" width="4" height="1" fill="#2b2e36"/><rect x="4" y="27" width="4" height="1" fill="#2b2e36"/><rect x="4" y="29" width="4" height="1" fill="#2b2e36"/><rect x="4" y="31" width="4" height="1" fill="#2b2e36"/><rect x="4" y="33" width="4" height="1" fill="#2b2e36"/><rect x="4" y="35" width="4" height="1" fill="#2b2e36"/><rect x="4" y="37" width="4" height="1" fill="#90ee78"/><rect x="4" y="39" width="4" height="1" fill="#90ee78"/><rect x="4" y="41" width="4" height="1" fill="#90ee78"/></svg>
</body></html>
